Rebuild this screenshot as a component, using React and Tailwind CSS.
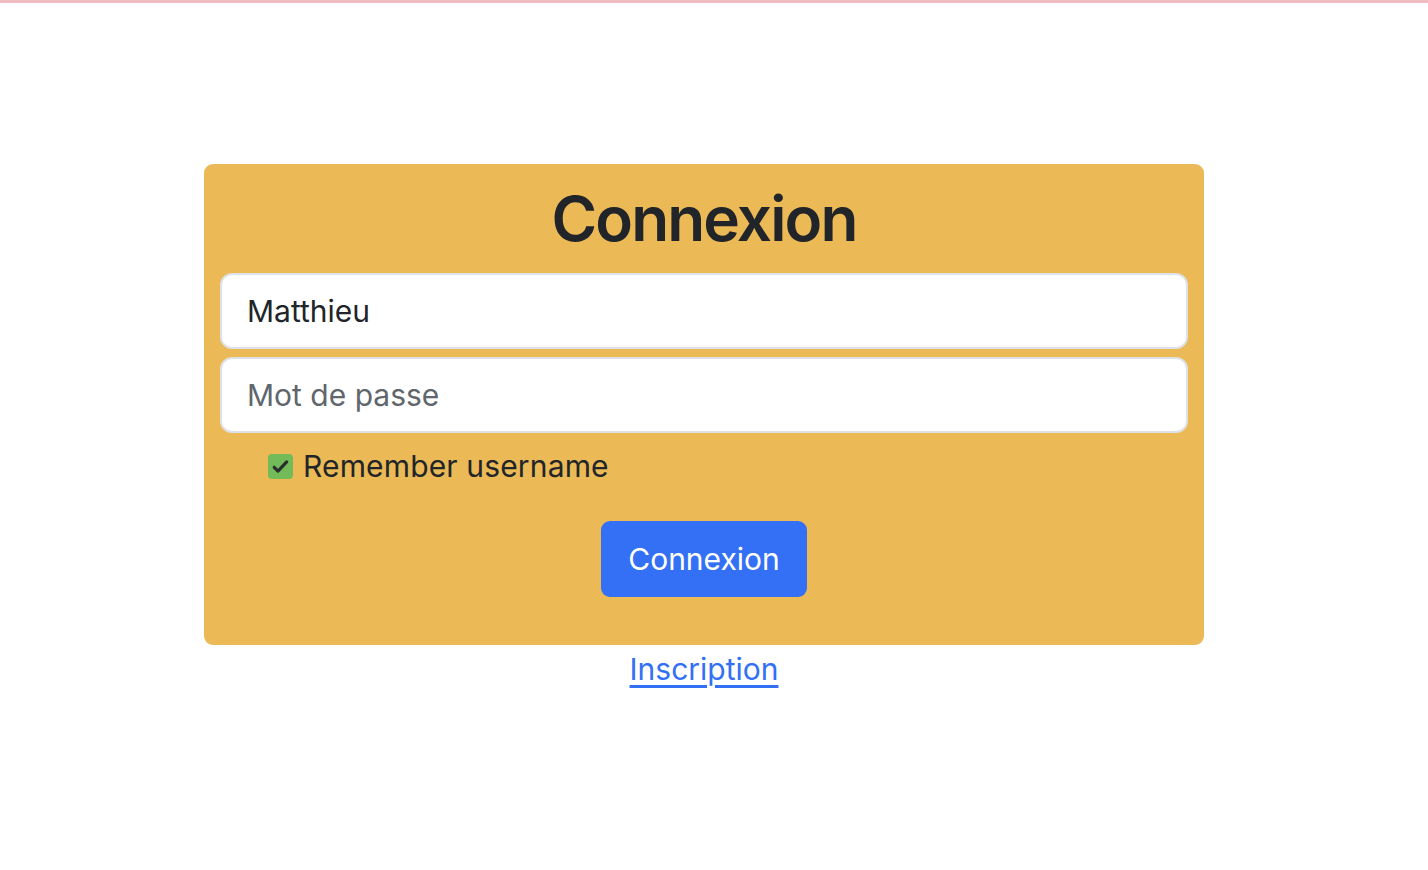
import React, { useState } from 'react';

const LoginPage = () => {
  const [username, setUsername] = useState('Matthieu');
  const [password, setPassword] = useState('');
  const [remember, setRemember] = useState(true);

  return (
    <div className="min-h-screen bg-white border-t-[3px] border-[#efbcc0] font-['Inter',sans-serif] text-[#212529]">
      <div className="pt-[161px] ml-[204px] w-[1000px]">
        {/* Card */}
        <form
          className="bg-[#ebb955] rounded-[9px] px-4 pt-4 pb-12 flex flex-col"
          onSubmit={e => e.preventDefault()}
        >
          <h1 className="text-center text-[62px] leading-[77px] font-semibold tracking-[-0.03em]">Connexion</h1>

          <div className="mt-4 flex flex-col gap-2">
            <input
              value={username}
              onChange={e => setUsername(e.target.value)}
              className="h-[76px] w-full bg-white border-2 border-[#dee2e6] rounded-xl pl-[25px] text-[30px] text-[#212529] outline-none"
            />
            <input
              type="password"
              value={password}
              onChange={e => setPassword(e.target.value)}
              placeholder="Mot de passe"
              className="h-[76px] w-full bg-white border-2 border-[#dee2e6] rounded-xl pl-[25px] text-[30px] text-[#212529] placeholder:text-[#5f666c] outline-none"
            />
          </div>

          <label className="mt-2 ml-12 flex items-center gap-[10px] h-[50px] text-[30px] tracking-[0.005em] cursor-pointer">
            <span
              onClick={() => setRemember(!remember)}
              className="w-[25px] h-[25px] rounded-[4px] bg-[#72bb58] flex items-center justify-center"
            >
              {remember && (
                <svg width="21" height="21" viewBox="0 0 16 16" fill="none">
                  <path d="M3.2 8.6l2.9 2.9 6.6-7" stroke="#2b2d2f" strokeWidth="2.4" strokeLinecap="round" strokeLinejoin="round" />
                </svg>
              )}
            </span>
            <span>Remember username</span>
          </label>

          <div className="mt-[30px] flex justify-center">
            <button
              type="submit"
              className="w-[206px] h-[76px] rounded-[9px] bg-[#3370f5] text-white text-[30px]"
            >
              Connexion
            </button>
          </div>
        </form>

        <div className="text-center pt-[2px]">
          <a href="#" className="text-[30px] leading-[45px] text-[#3370f5] underline underline-offset-[5px]">
            Inscription
          </a>
        </div>
      </div>
    </div>
  );
};

export default LoginPage;
